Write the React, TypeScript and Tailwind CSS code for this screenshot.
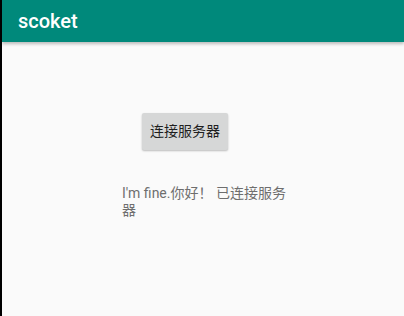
export default function App() {
  return (
    <div className="flex h-[316px] w-[404px] overflow-hidden bg-[#fafafa]" style={{ fontFamily: 'Roboto, "Noto Sans CJK SC", sans-serif' }}>
      <div className="w-[2px] shrink-0 bg-black" />
      <div className="flex flex-1 flex-col">
        <div className="relative flex h-[42px] shrink-0 items-center bg-[#00897b] pb-[1px] pl-[16px] shadow-[0_2px_3px_rgba(0,0,0,0.25)]">
          <span className="text-[20px] font-medium text-white">scoket</span>
        </div>
        <div className="flex flex-col">
          <div className="mt-[71px] ml-[140px]">
            <button className="flex h-[37px] w-[86px] items-center justify-center rounded-[2px] bg-[#d6d7d7] text-[14px] text-[#1f1f1f] shadow-[0_1px_2px_rgba(0,0,0,0.25)]">
              连接服务器
            </button>
          </div>
          <div className="mt-[35px] ml-[120px] w-[172px] text-[14px] leading-[17px] text-[#6e6e6e]">
            I'm fine.你好！ 已连接服务器
          </div>
        </div>
      </div>
    </div>
  );
}
